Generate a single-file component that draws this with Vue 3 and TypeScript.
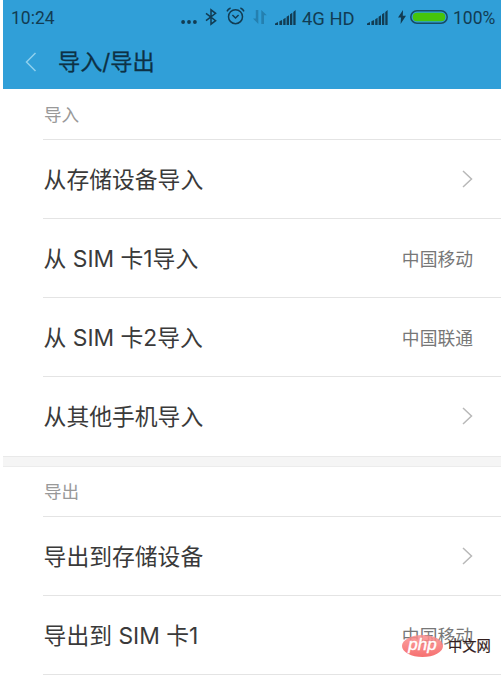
<script setup lang="ts">
interface Row {
  label: string
  value?: string
}
interface Section {
  title: string
  rows: Row[]
}

const sections: Section[] = [
  {
    title: '导入',
    rows: [
      { label: '从存储设备导入' },
      { label: '从 SIM 卡1导入', value: '中国移动' },
      { label: '从 SIM 卡2导入', value: '中国联通' },
      { label: '从其他手机导入' },
    ],
  },
  {
    title: '导出',
    rows: [{ label: '导出到存储设备' }, { label: '导出到 SIM 卡1', value: '中国移动' }],
  },
]
</script>

<template>
  <div class="screen">
    <header class="header">
      <div class="status">
        <span class="time">10:24</span>
        <svg class="dots" width="16" height="6" viewBox="0 0 16 6">
          <circle cx="2.1" cy="3" r="1.9" /><circle cx="8" cy="3" r="1.9" /><circle cx="13.9" cy="3" r="1.9" />
        </svg>
        <svg class="bluetooth" width="12" height="18" viewBox="0 0 12 18">
          <path d="M1 5.3l9.6 7.4L6 16.2V1.8l4.6 3.5L1 12.7" />
        </svg>
        <svg class="alarm" width="19" height="18" viewBox="0 0 19 18">
          <circle cx="9.5" cy="9.7" r="7" />
          <path d="M1 4.4Q2 2 4.6 1M18 4.4Q17 2 14.4 1M6.4 8l3.1 3 3.1-3" />
        </svg>
        <svg class="data" width="14" height="14" viewBox="0 0 14 14">
          <path d="M0 8.6h2.8V0h2.5v14zM8.3 0l5.5 5.3H11V14H8.3z" />
        </svg>
        <svg class="signal" width="21" height="15" viewBox="0 0 21 15">
          <path d="M0 15v-1.5L3 12v3zM4.4 11.3l2.7-1.2V15H4.4zM8.2 9.2l2.4-1.4V15H8.2zM11.6 6.8L14 5.2V15h-2.4zM15 4.2l2.3-1.4V15H15zM18.3 2l2.3-2v15h-2.3z" />
        </svg>
        <span class="network">4G HD</span>
        <svg class="signal second" width="21" height="15" viewBox="0 0 21 15">
          <path d="M0 15v-1.5L3 12v3zM4.4 11.3l2.7-1.2V15H4.4zM8.2 9.2l2.4-1.4V15H8.2zM11.6 6.8L14 5.2V15h-2.4zM15 4.2l2.3-1.4V15H15zM18.3 2l2.3-2v15h-2.3z" />
        </svg>
        <svg class="bolt" width="8" height="14" viewBox="0 0 8 14">
          <path d="M5 0L0 7.6h3L2.6 14 8 5.8H4.8z" />
        </svg>
        <svg class="battery" width="38" height="14" viewBox="0 0 38 14">
          <rect class="shell" x=".8" y=".8" width="36.4" height="12.4" rx="6.2" />
          <rect class="charge" x="2.8" y="2.8" width="32.4" height="8.4" rx="4" />
        </svg>
        <span class="percent">100%</span>
      </div>
      <div class="titlebar">
        <svg class="back" width="12" height="20" viewBox="0 0 12 20"><path d="M10.5 1L1.5 10l9 9" /></svg>
        <h1>导入/导出</h1>
      </div>
    </header>

    <main>
      <section v-for="section in sections" :key="section.title">
        <h2>{{ section.title }}</h2>
        <ul>
          <li v-for="row in section.rows" :key="row.label">
            <span class="label">{{ row.label }}</span>
            <span v-if="row.value" class="value">{{ row.value }}</span>
            <svg v-else class="chevron" width="11" height="18" viewBox="0 0 11 18"><path d="M1 1l8.5 8L1 17" /></svg>
          </li>
        </ul>
      </section>
    </main>

    <div class="watermark">
      <span class="badge">php</span>
      <span class="site">中文网</span>
    </div>
  </div>
</template>

<style>
body {
  margin: 0;
  background: #fff;
}
</style>

<style scoped>
.screen {
  position: relative;
  box-sizing: border-box;
  width: 501px;
  height: 679px;
  padding-left: 3px;
  overflow: hidden;
  background: #fff;
  font-family: Inter, 'Noto Sans CJK SC', sans-serif;
}
svg {
  flex: none;
}
.header {
  height: 89px;
  box-sizing: border-box;
  background: #309fd8;
  color: #123c53;
}
.status {
  display: flex;
  align-items: center;
  height: 35px;
  padding-left: 8px;
  font: 17.5px/35px Roboto, sans-serif;
  white-space: nowrap;
  fill: #123c53;
}
.time,
.network,
.percent {
  padding-top: 1px;
}
.time {
  width: 169px;
}
.dots {
  margin: 8px 8px 0 1px;
}
.bluetooth,
.alarm {
  fill: none;
  stroke: #123c53;
  stroke-width: 1.5;
}
.bluetooth {
  margin: -2px 9px 0 0;
}
.alarm {
  margin: -3px 8px 0 0;
}
.data {
  margin: -1px 8px 0 0;
  fill: #2480b0;
}
.signal {
  margin: -1px 6px 0 0;
}
.network {
  width: 65px;
  font-size: 18.4px;
}
.second {
  margin-right: 10px;
}
.bolt {
  margin: -2px 4px 0 0;
}
.battery {
  margin: -2px 5px 0 0;
}
.shell {
  fill: none;
  stroke: #174c65;
  stroke-width: 1.5;
}
.charge {
  fill: #46c40b;
}
.titlebar {
  display: flex;
  align-items: center;
  height: 54px;
  padding-left: 22px;
}
.back {
  fill: none;
  stroke: #8fd0ee;
  stroke-width: 1.5;
}
h1 {
  margin: 0 0 0 21px;
  font-size: 22.2px;
  font-weight: 400;
  line-height: 54px;
  color: #0d3145;
  -webkit-text-stroke: 0.3px #0d3145;
}
section {
  height: 367px;
}
section + section {
  border-top: 1px solid #e9e9e9;
  padding-top: 9px;
  background: linear-gradient(#f5f5f5 9px, #ececec 9px, #ececec 10px, #fff 10px);
}
h2 {
  box-sizing: border-box;
  height: 50px;
  margin: 0;
  padding: 1px 0 0 41px;
  font-size: 17.6px;
  font-weight: 400;
  line-height: 50px;
  color: #999;
}
ul {
  margin: 0 0 0 40px;
  padding: 0;
  list-style: none;
}
li {
  display: flex;
  align-items: center;
  justify-content: space-between;
  box-sizing: border-box;
  height: 79.1px;
  padding: 0 28px 0 0.6px;
  border-top: 1px solid #e4e4e4;
}
section:last-child li:last-child {
  border-bottom: 1px solid #e4e4e4;
  height: 80px;
}
.label {
  padding-bottom: 2px;
  font-size: 22.8px;
  color: #3a3a3a;
}
.value {
  padding-bottom: 1px;
  font-size: 17.8px;
  color: #777;
}
.chevron {
  fill: none;
  stroke: #b8b8b8;
  stroke-width: 1.5;
}
.watermark {
  position: absolute;
  left: 402px;
  top: 635px;
  display: flex;
  align-items: center;
  gap: 5px;
}
.badge {
  width: 41px;
  height: 22px;
  border-radius: 50%;
  background: linear-gradient(rgba(250, 145, 145, 0.85), rgba(245, 100, 100, 0.92));
  color: #fff;
  font: italic 400 17px/19px 'Liberation Sans', sans-serif;
  -webkit-text-stroke: 0.4px #fff;
  text-align: center;
}
.site {
  font-size: 14.3px;
  font-weight: 400;
  line-height: 22px;
  color: #321d1d;
  -webkit-text-stroke: 0.2px #321d1d;
}
</style>
